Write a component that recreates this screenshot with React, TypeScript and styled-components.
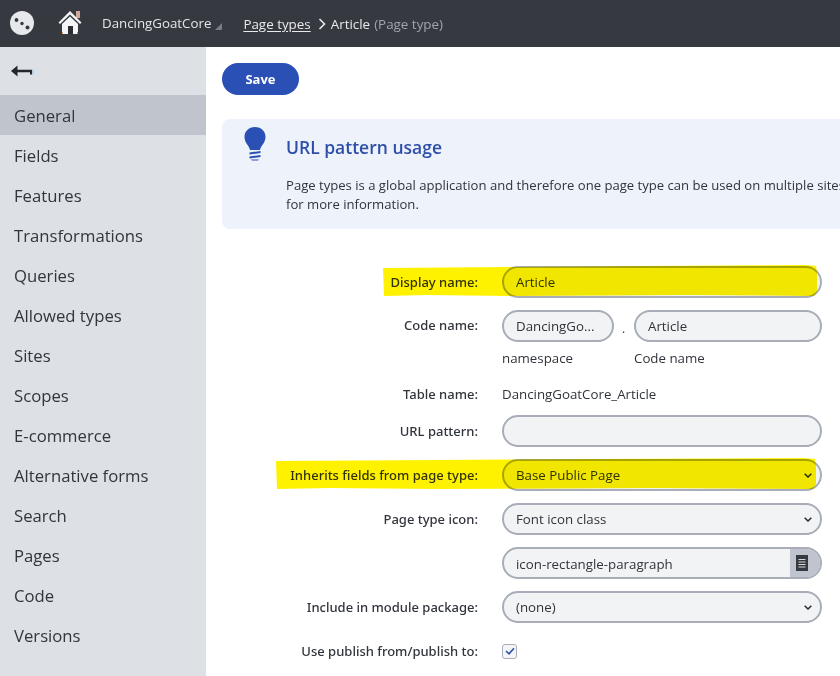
import styled, { createGlobalStyle } from "styled-components";

const GlobalStyle = createGlobalStyle`
  html, body {
    margin: 0;
    padding: 0;
    background: #fff;
  }
  * {
    box-sizing: border-box;
  }
`;

const chevron =
  "url(\"data:image/svg+xml,%3Csvg xmlns='http://www.w3.org/2000/svg' width='8' height='5' viewBox='0 0 8 5'%3E%3Cpath d='M0.7 0.7 L4 4 L7.3 0.7' fill='none' stroke='%2330343b' stroke-width='1.6'/%3E%3C/svg%3E\")";

const Page = styled.div`
  width: 840px;
  height: 676px;
  overflow: hidden;
  font-family: "Open Sans", "Noto Sans", sans-serif;
  color: #30343b;
`;

const Header = styled.header`
  height: 47px;
  background: #363940;
  display: flex;
  align-items: center;
  padding-left: 10px;
`;

const Logo = styled.svg`
  width: 24px;
  height: 24px;
  margin-right: 23px;
  margin-top: -1px;
`;

const HomeIcon = styled.svg`
  width: 26px;
  height: 26px;
  margin-right: 19px;
  margin-top: -3px;
`;

const SiteName = styled.span`
  color: #e2e5e9;
  font-size: 13.3px;
  margin-top: -2px;
`;

const Caret = styled.span`
  width: 0;
  height: 0;
  margin: 6px 21px 0 4px;
  border-left: 7px solid transparent;
  border-bottom: 7px solid #777b83;
`;

const Crumb = styled.a`
  color: #e8eaee;
  font-size: 13.4px;
  text-decoration: underline;
  text-underline-offset: 2px;
`;

const CrumbSeparator = styled.svg`
  width: 8px;
  height: 12px;
  margin: 0 5px 0 7px;
`;

const CurrentCrumb = styled.span`
  color: #e8eaee;
  font-size: 13.4px;
`;

const Muted = styled.span`
  color: #a0a4ab;
  margin-left: 4px;
`;

const Body = styled.div`
  display: flex;
  height: 629px;
`;

const Sidebar = styled.nav`
  width: 206px;
  flex: none;
  background: #dde0e4;
`;

const BackRow = styled.div`
  height: 48px;
  display: flex;
  align-items: center;
  padding: 2px 0 0 11px;
`;

const NavItem = styled.div<{ $active?: boolean }>`
  height: 40px;
  display: flex;
  align-items: center;
  padding-left: 14px;
  font-size: 16.7px;
  color: #31353c;
  background: ${(p) => (p.$active ? "#c0c5cd" : "transparent")};
`;

const Main = styled.main`
  flex: 1;
  min-width: 0;
  padding: 16px 0 0 16px;
`;

const SaveButton = styled.button`
  display: block;
  width: 77px;
  height: 32px;
  border: none;
  border-radius: 16px;
  background: #2b50b5;
  color: #fff;
  font-family: inherit;
  font-size: 13px;
  font-weight: 700;
`;

const Notice = styled.section`
  position: relative;
  width: 700px;
  height: 110px;
  margin-top: 24px;
  padding: 16px 0 0 64px;
  border-radius: 8px;
  background: #eef2fb;
  display: flex;
  flex-direction: column;
`;

const NoticeIcon = styled.svg`
  position: absolute;
  left: 21px;
  top: 7px;
  width: 24px;
  height: 35px;
`;

const NoticeTitle = styled.h2`
  margin: 0 0 17px;
  color: #2e4fa8;
  font-size: 17.5px;
  font-weight: 600;
  line-height: 24px;
`;

const NoticeText = styled.p`
  margin: 0;
  font-size: 13.1px;
  line-height: 19px;
  white-space: nowrap;
`;

const Form = styled.div`
  margin-top: 37px;
  display: flex;
  flex-direction: column;
`;

const Row = styled.div<{ $gap?: number }>`
  position: relative;
  display: grid;
  grid-template-columns: 256px 320px;
  column-gap: 24px;
  align-items: center;
  min-height: 32px;
  margin-bottom: ${(p) => p.$gap ?? 12}px;
`;

const Label = styled.label<{ $top?: boolean }>`
  text-align: right;
  font-family: "Noto Sans", "Open Sans", sans-serif;
  font-size: 13px;
  font-weight: 500;
  color: #30343b;
  margin-top: -1px;
  ${(p) => p.$top && "align-self: start; padding-top: 7px;"}
`;

const Input = styled.input`
  width: 100%;
  height: 32px;
  padding: 0 12px;
  border: 2px solid #a8adb7;
  border-radius: 16px;
  background: #f1f3f5;
  color: #30343b;
  font-family: inherit;
  font-size: 13.3px;
  outline: none;
`;

const Select = styled.select`
  appearance: none;
  width: 100%;
  height: 32px;
  padding: 0 12px;
  border: 2px solid #a8adb7;
  border-radius: 16px;
  background: #f1f3f5 ${chevron} no-repeat right 8px center;
  color: #30343b;
  font-family: inherit;
  font-size: 13.3px;
`;

const CodeFields = styled.div`
  display: grid;
  grid-template-columns: 112px 188px;
  column-gap: 20px;
  row-gap: 8px;
  position: relative;
`;

const Dot = styled.span`
  position: absolute;
  left: 120px;
  top: 10px;
  font-size: 12px;
`;

const Hint = styled.span`
  font-size: 13.3px;
  line-height: 17px;
`;

const PlainValue = styled.span`
  font-size: 13.3px;
`;

const PickerField = styled.div`
  display: flex;
  height: 32px;
  border: 2px solid #a8adb7;
  border-radius: 16px;
  background: #f1f3f5;
  overflow: hidden;
`;

const PickerInput = styled.input`
  flex: 1;
  min-width: 0;
  padding: 1px 12px 0;
  border: none;
  background: transparent;
  color: #30343b;
  font-family: inherit;
  font-size: 13.3px;
  outline: none;
`;

const PickerButton = styled.span`
  width: 30px;
  display: flex;
  align-items: center;
  justify-content: center;
  padding-right: 6px;
  background: #bfc4ce;
`;

const CheckBox = styled.span`
  width: 15px;
  height: 15px;
  border: 1.5px solid #a8adb7;
  border-radius: 3px;
  background: #f5f6f8;
  display: flex;
  align-items: center;
  justify-content: center;
`;

// marker stroke drawn over the finished form
const Marker = styled.svg<{ $left: number; $width: number }>`
  position: absolute;
  left: ${(p) => p.$left}px;
  top: -1px;
  width: ${(p) => p.$width}px;
  height: 34px;
  mix-blend-mode: multiply;
  pointer-events: none;
`;

const navItems = [
  "General",
  "Fields",
  "Features",
  "Transformations",
  "Queries",
  "Allowed types",
  "Sites",
  "Scopes",
  "E-commerce",
  "Alternative forms",
  "Search",
  "Pages",
  "Code",
  "Versions",
];

function MarkerStroke({ left, width }: { left: number; width: number }) {
  const w = width;
  return (
    <Marker $left={left} $width={width} viewBox={`0 0 ${w} 34`} preserveAspectRatio="none">
      <path
        d={`M0 3 L${w * 0.3} 2 L${w * 0.6} 1 L${w - 12} 0 L${w - 1} 1 L${w} 8 L${w} 26 L${w - 3} 31 L${w * 0.7} 30 L${w * 0.3} 31 L${w * 0.1} 30 L1 31 Z`}
        fill="#fff200"
      />
    </Marker>
  );
}

export default function App() {
  return (
    <Page>
      <GlobalStyle />
      <Header>
        <Logo viewBox="0 0 24 24">
          <circle cx="12" cy="12" r="12" fill="#e6e8ec" />
          <circle cx="6.5" cy="9" r="1.9" fill="#363940" />
          <circle cx="12" cy="12.5" r="1.7" fill="#363940" />
          <circle cx="17.5" cy="16.5" r="2" fill="#363940" />
        </Logo>
        <HomeIcon viewBox="0 0 26 26">
          <rect x="19" y="2" width="4" height="7" fill="#d2a79a" />
          <path d="M13 2 L1.5 13.5 L3 15 L13 5.5 L23 15 L24.5 13.5 Z" fill="#f2f4f6" />
          <path d="M5 15 L13 7.5 L21 15 V25 H5 Z" fill="#f4f5f7" />
          <rect x="11" y="17" width="5" height="8" fill="#2b2e35" />
          <rect x="5" y="23" width="1" height="2" fill="#e0a070" />
          <rect x="20" y="23" width="1" height="2" fill="#6fa0d0" />
        </HomeIcon>
        <SiteName>DancingGoatCore</SiteName>
        <Caret />
        <Crumb>Page types</Crumb>
        <CrumbSeparator viewBox="0 0 8 12">
          <path d="M1.5 1 L6.5 6 L1.5 11" fill="none" stroke="#e8eaee" strokeWidth="1.6" />
        </CrumbSeparator>
        <CurrentCrumb>
          Article<Muted>(Page type)</Muted>
        </CurrentCrumb>
      </Header>
      <Body>
        <Sidebar>
          <BackRow>
            <svg width="24" height="14" viewBox="0 0 24 14">
              <path d="M0 6 L6.5 0.5 V11.5 Z" fill="#23262b" />
              <path d="M5 4.8 H21 V9.5 H19 V7.2 H5 Z" fill="#23262b" />
              <rect x="21" y="4.8" width="2" height="4.7" fill="#b5cfe6" />
            </svg>
          </BackRow>
          {navItems.map((item) => (
            <NavItem key={item} $active={item === "General"}>
              {item}
            </NavItem>
          ))}
        </Sidebar>
        <Main>
          <SaveButton>Save</SaveButton>
          <Notice>
            <NoticeIcon viewBox="0 0 24 35">
              <path
                d="M12 1 C5.5 1 1.5 5.5 1.5 11 C1.5 17 6 19 7 24 H17 C18 19 22.5 17 22.5 11 C22.5 5.5 18.5 1 12 1 Z"
                fill="#2b50b5"
              />
              <path d="M6.5 26.5 L17.5 25 V27 L6.5 28.5 Z" fill="#2b50b5" />
              <path d="M6.5 30.5 L17.5 29 V31 L6.5 32.5 Z" fill="#2b50b5" />
              <path d="M8 33.5 H16 L15 34.5 H9 Z" fill="#2b50b5" />
            </NoticeIcon>
            <NoticeTitle>URL pattern usage</NoticeTitle>
            <NoticeText>
              Page types is a global application and therefore one page type can be used on multiple sites. See documentation
              <br />
              for more information.
            </NoticeText>
          </Notice>
          <Form>
            <Row>
              <Label>Display name:</Label>
              <Input readOnly value="Article" />
              <MarkerStroke left={161} width={434} />
            </Row>
            <Row $gap={11}>
              <Label $top>Code name:</Label>
              <CodeFields>
                <Input readOnly value="DancingGo..." />
                <Dot>.</Dot>
                <Input readOnly value="Article" />
                <Hint>namespace</Hint>
                <Hint>Code name</Hint>
              </CodeFields>
            </Row>
            <Row $gap={5}>
              <Label>Table name:</Label>
              <PlainValue>DancingGoatCore_Article</PlainValue>
            </Row>
            <Row>
              <Label>URL pattern:</Label>
              <Input readOnly value="" />
            </Row>
            <Row>
              <Label>Inherits fields from page type:</Label>
              <Select defaultValue="base">
                <option value="base">Base Public Page</option>
              </Select>
              <MarkerStroke left={54} width={540} />
            </Row>
            <Row>
              <Label>Page type icon:</Label>
              <Select defaultValue="font">
                <option value="font">Font icon class</option>
              </Select>
            </Row>
            <Row>
              <span />
              <PickerField>
                <PickerInput readOnly value="icon-rectangle-paragraph" />
                <PickerButton>
                  <svg width="12" height="16" viewBox="0 0 12 16">
                    <rect width="12" height="16" fill="#363940" />
                    <path d="M2.5 4.5 H9.5 M2.5 7 H9.5 M2.5 9.5 H9.5 M2.5 12 H9.5" stroke="#d6d9de" strokeWidth="1" />
                  </svg>
                </PickerButton>
              </PickerField>
            </Row>
            <Row>
              <Label>Include in module package:</Label>
              <Select defaultValue="none">
                <option value="none">(none)</option>
              </Select>
            </Row>
            <Row>
              <Label>Use publish from/publish to:</Label>
              <CheckBox>
                <svg width="10" height="8" viewBox="0 0 10 8">
                  <path d="M1 4 L4 6.8 L9 1.2" fill="none" stroke="#2e4fa8" strokeWidth="1.6" />
                </svg>
              </CheckBox>
            </Row>
          </Form>
        </Main>
      </Body>
    </Page>
  );
}
